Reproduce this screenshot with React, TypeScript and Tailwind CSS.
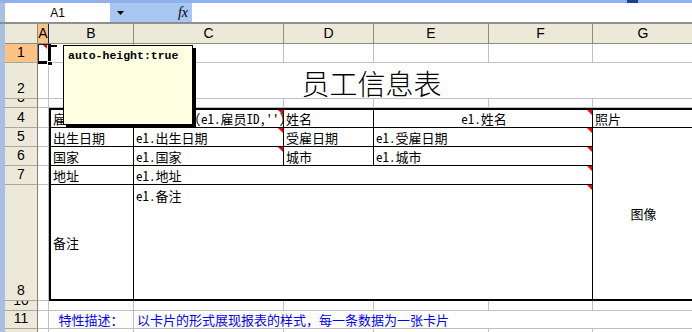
import React from 'react';

const colStart = ['col-start-1', 'col-start-2', 'col-start-3', 'col-start-4', 'col-start-5', 'col-start-6', 'col-start-7', 'col-start-8', 'col-start-9'];
const rowStart = ['row-start-1', 'row-start-2', 'row-start-3', 'row-start-4', 'row-start-5', 'row-start-6', 'row-start-7', 'row-start-8', 'row-start-9', 'row-start-10', 'row-start-11', 'row-start-12'];

const colLabels = ['A', 'B', 'C', 'D', 'E', 'F', 'G', 'H'];
const rowLabels = ['1', '2', '3', '4', '5', '6', '7', '8', '10', '11', '12'];

// table cell base
const T =
  "relative bg-white border-r border-b border-black flex items-center overflow-hidden whitespace-nowrap pl-[2px] text-[13px] leading-none font-['Noto_Sans_Mono_CJK_SC','Noto_Sans_CJK_SC',sans-serif]";

const Mark = () => (
  <span className="absolute top-0 right-0 w-0 h-0 border-t-[5px] border-l-[5px] border-t-[#ff0000] border-l-transparent" />
);

const FormulaBar: React.FC = () => (
  <div>
    <div className="h-[3px] flex bg-[#8fb2ea]">
      <div className="w-[627px]" />
      <div className="w-[11px] bg-[#1d4096]" />
    </div>
    <div className="flex h-[19px]">
      <div className="w-[5px] bg-[#a9bfe4]" />
      <div className="w-[105px] bg-white flex items-center justify-center text-[12px]">A1</div>
      <div className="w-[82px] bg-[#a8c6f2] flex items-center justify-between pl-[7px] pr-[4px]">
        <svg width="7" height="4" viewBox="0 0 7 4">
          <path d="M0 0H7L3.5 4Z" fill="#000" />
        </svg>
        <span className="italic text-[14px] font-['Liberation_Serif',serif] leading-none">fx</span>
      </div>
      <div className="flex-1 bg-white" />
    </div>
    <div className="h-[2px] bg-[#8f8f8f]" />
  </div>
);

const Sheet: React.FC = () => (
  <div className="grid shrink-0 grid-cols-[33px_11px_85px_150px_90px_115px_104px_101px_80px] grid-rows-[20px_19px_36px_9px_20px_19px_19px_19px_116px_10px_18px_19px]">
    {/* corner + column headers */}
    <div className="col-start-1 row-start-1 bg-[#ece9d8] border-r border-b border-[#8e8c7c]" />
    {colLabels.map((l, i) => (
      <div
        key={l}
        className={`${colStart[i + 1]} row-start-1 border-r border-b border-[#8e8c7c] flex items-center justify-center text-[14px] ${
          i === 0 ? 'bg-[#fcc383] border-r-[#0a246a]' : 'bg-[#ece9d8]'
        }`}
      >
        {l}
      </div>
    ))}

    {/* row headers */}
    {rowLabels.map((l, i) => (
      <div
        key={l}
        className={`col-start-1 ${rowStart[i + 1]} border-r border-r-[#808080] border-b border-b-[#aca899] flex items-end justify-center overflow-hidden text-[14px] leading-[16px] pb-[2px] ${
          i === 0 ? 'bg-[#fcc383]' : 'bg-[#ece9d8]'
        }`}
      >
        {l}
      </div>
    ))}

    {/* gridlines */}
    {[2, 3, 4, 5, 6, 7, 8, 9, 10, 11, 12].flatMap((r) =>
      [2, 3, 4, 5, 6, 7, 8, 9].map((c) => (
        <div key={`${r}-${c}`} className={`${rowStart[r - 1]} ${colStart[c - 1]} border-r border-b border-[#c0c0c0]`} />
      ))
    )}

    {/* A1 selected */}
    <div className="col-start-2 row-start-2 relative border-l border-t border-[#0a246a]">
      <span className="absolute top-0 right-[2px] w-0 h-0 border-t-[4px] border-l-[4px] border-t-[#ff0000] border-l-transparent" />
      <span className="absolute -top-px -right-[2px] w-[3px] h-[20px] bg-black" />
      <span className="absolute -bottom-px -left-px w-[14px] h-[3px] bg-black" />
      <span className="absolute -bottom-[3px] -right-[4px] w-[6px] h-[5px] bg-black border border-white" />
    </div>

    {/* title */}
    <div className="col-start-3 col-span-6 row-start-3 bg-white border-b border-[#c0c0c0] flex items-end justify-center pb-[1px] text-[28px] leading-none font-light font-['Noto_Sans_CJK_SC',sans-serif]">
      员工信息表
    </div>

    {/* row 4 */}
    <div className={`${T} col-start-3 row-start-5 border-t-2 border-l-2 pl-[1px]`}>雇员ID</div>
    <div className={`${T} col-start-4 row-start-5 border-t-2`}>
      e1.select(e1.雇员ID,'')
      <Mark />
    </div>
    <div className={`${T} col-start-5 row-start-5 border-t-2`}>姓名</div>
    <div className={`${T} col-start-6 col-span-2 row-start-5 border-t-2 justify-center`}>
      e1.姓名
      <Mark />
    </div>
    <div className={`${T} col-start-8 row-start-5 border-t-2 border-r-2`}>照片</div>

    {/* row 5 */}
    <div className={`${T} col-start-3 row-start-6 border-l-2 pl-[1px]`}>出生日期</div>
    <div className={`${T} col-start-4 row-start-6`}>
      e1.出生日期
      <Mark />
    </div>
    <div className={`${T} col-start-5 row-start-6`}>受雇日期</div>
    <div className={`${T} col-start-6 col-span-2 row-start-6`}>
      e1.受雇日期
      <Mark />
    </div>
    <div className={`${T} col-start-8 row-start-6 row-span-4 border-r-2 border-b-2 justify-center`}>图像</div>

    {/* row 6 */}
    <div className={`${T} col-start-3 row-start-7 border-l-2 pl-[1px]`}>国家</div>
    <div className={`${T} col-start-4 row-start-7`}>
      e1.国家
      <Mark />
    </div>
    <div className={`${T} col-start-5 row-start-7`}>城市</div>
    <div className={`${T} col-start-6 col-span-2 row-start-7`}>
      e1.城市
      <Mark />
    </div>

    {/* row 7 */}
    <div className={`${T} col-start-3 row-start-8 border-l-2 pl-[1px]`}>地址</div>
    <div className={`${T} col-start-4 col-span-4 row-start-8`}>
      e1.地址
      <Mark />
    </div>

    {/* row 8 */}
    <div className={`${T} col-start-3 row-start-9 border-l-2 border-b-2 pl-[1px]`}>备注</div>
    <div className={`${T} col-start-4 col-span-4 row-start-9 border-b-2 items-start pt-[4px]`}>
      e1.备注
      <Mark />
    </div>

    {/* row 11 */}
    <div className="col-start-3 row-start-11 border-r border-b border-[#c0c0c0] flex items-center justify-center text-[13px] leading-none text-[#0000ff] font-['Noto_Sans_CJK_SC',sans-serif]">
      特性描述：
    </div>
    <div className="col-start-4 col-span-6 row-start-11 bg-white border-b border-[#c0c0c0] flex items-center pl-[3px] text-[13px] leading-none text-[#0000ff] whitespace-nowrap font-['Noto_Sans_CJK_SC',sans-serif]">
      以卡片的形式展现报表的样式，每一条数据为一张卡片
    </div>
  </div>
);

export default function App() {
  return (
    <div className="relative w-[692px] h-[332px] overflow-hidden bg-white text-black font-['Liberation_Sans',Arial,sans-serif]">
      <FormulaBar />
      <div className="flex">
        <div className="w-[5px] shrink-0 bg-[#a9bfe4]" />
        <Sheet />
      </div>

      {/* comment popup */}
      <div className="absolute left-[51px] top-[45px] w-[6px] h-[2px] bg-black" />
      <div className="absolute left-[63px] top-[45px] w-[130px] h-[80px] bg-[#ffffe1] border border-black shadow-[3px_3px_0_#000] pl-[4px] pt-[3px] font-['Liberation_Mono',monospace] font-bold text-[11.5px] leading-[14px]">
        auto-height:true
      </div>
    </div>
  );
}
